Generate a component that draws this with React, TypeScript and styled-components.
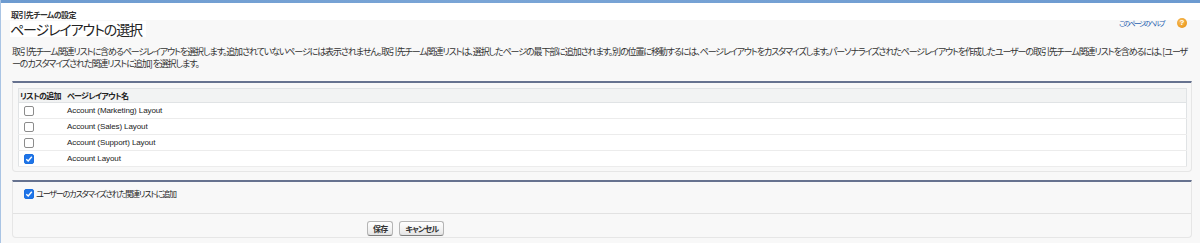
import React from "react";
import styled, { createGlobalStyle } from "styled-components";

const GlobalStyle = createGlobalStyle`
    html, body {
        margin: 0;
        padding: 0;
        background: #f8f8f8;
    }
    body {
        font-family: "Noto Sans CJK JP", "Liberation Sans", sans-serif;
        font-feature-settings: "palt";
        color: #222;
    }
`;

const Page = styled.div`
    width: 1200px;
    height: 243px;
    overflow: hidden;
    border-left: 1px solid #a9c4e4;
    box-sizing: border-box;
    background: #f8f8f8;
`;

const TopStrip = styled.div`
    height: 3px;
    background: linear-gradient(90deg, #6d9bd0 0%, #7aa5d6 40%, #6c9ad0 100%);
`;

const HeaderBand = styled.div`
    height: 17px;
    background: #ffffff;
    display: flex;
    align-items: flex-end;
    padding-left: 10px;
`;

const Breadcrumb = styled.div`
    font-size: 8px;
    font-weight: bold;
    line-height: 8px;
    letter-spacing: -0.6px;
    color: #333;
    margin-bottom: 1px;
`;

const TitleRow = styled.div`
    display: flex;
    justify-content: space-between;
    align-items: flex-start;
    padding: 1px 13px 0 9px;
    height: 17px;
`;

const Title = styled.h1`
    margin: 0;
    font-size: 14px;
    font-weight: normal;
    line-height: 16px;
    letter-spacing: -1.1px;
    color: #222;
    background: #ffffff;
    padding-right: 4px;
`;

const HelpLink = styled.a`
    display: flex;
    align-items: center;
    gap: 13px;
    font-size: 7px;
    letter-spacing: -1.7px;
    color: #1f5fb0;
    text-decoration: none;
    margin-top: -3px;
`;

const HelpIcon = styled.span`
    width: 10px;
    height: 10px;
    border-radius: 50%;
    background: radial-gradient(circle at 40% 35%, #f7c060 0%, #ec9a20 70%, #d98310 100%);
    color: #fff;
    font-size: 8px;
    font-weight: bold;
    line-height: 10px;
    letter-spacing: 0;
    text-align: center;
    font-family: "Liberation Sans", sans-serif;
`;

const Description = styled.p`
    margin: 8px 0 0 0;
    padding: 0 10px 0 11px;
    font-size: 9px;
    line-height: 12px;
    letter-spacing: -1.1px;
    color: #333;
`;

const Panel = styled.div<{ $top: number }>`
    margin: ${(p) => p.$top}px 8px 0 11px;
    background: #f8f8f8;
    border: 1px solid #e6e6e6;
    border-top: 2px solid #66728f;
    border-radius: 0 0 4px 4px;
`;

const TableWrap = styled.div`
    padding: 5px 4px 4px 5px;
`;

const Table = styled.table`
    width: 100%;
    border-collapse: collapse;
    background: #ffffff;
    border: 1px solid #e0e3e5;
`;

const HeadCell = styled.th<{ $width?: number }>`
    text-align: left;
    font-size: 8px;
    font-weight: bold;
    letter-spacing: -0.7px;
    color: #222;
    background: #f2f3f3;
    height: 13px;
    padding: 0 0 0 ${(p) => (p.$width ? 1 : 5)}px;
    width: ${(p) => (p.$width ? `${p.$width}px` : "auto")};
    border-bottom: 1px solid #e0e3e5;
`;

const Cell = styled.td`
    height: 15px;
    padding: 0 0 0 5px;
    font-size: 8px;
    color: #222;
    border-bottom: 1px solid #ececec;
    font-family: "Liberation Sans", "Noto Sans CJK JP", sans-serif;
    letter-spacing: -0.1px;
    vertical-align: middle;
`;

const Box = styled.span<{ $checked?: boolean }>`
    display: inline-flex;
    align-items: center;
    justify-content: center;
    width: 10px;
    height: 10px;
    box-sizing: border-box;
    border-radius: 2px;
    border: 1px solid ${(p) => (p.$checked ? "#1b6fe0" : "#8c8c8c")};
    background: ${(p) => (p.$checked ? "#1e74e8" : "#ffffff")};
    vertical-align: middle;
`;

const OptionRow = styled.div`
    display: flex;
    align-items: center;
    gap: 2px;
    padding: 6px 0 14px 11px;
    height: 11px;
    font-size: 8px;
    letter-spacing: -1.1px;
    color: #222;
`;

const ButtonRow = styled.div`
    border-top: 1px solid #e2e2e2;
    display: flex;
    gap: 6px;
    padding: 7px 0 1px 354px;
`;

const Button = styled.button`
    height: 15px;
    padding: 0 5px;
    font-family: inherit;
    font-feature-settings: "palt";
    font-size: 8px;
    font-weight: bold;
    letter-spacing: -0.8px;
    color: #333;
    border: 1px solid #b5b5b5;
    border-bottom-color: #7f7f7f;
    border-radius: 3px;
    background: linear-gradient(#ffffff, #f1f1f1 60%, #e4e4e4);
    line-height: 13px;
`;

const Check: React.FC<{ checked?: boolean }> = ({ checked }) => (
    <Box $checked={checked}>
        {checked && (
            <svg width="8" height="8" viewBox="0 0 8 8">
                <path d="M1.3 4.2 L3.2 6 L6.8 1.8" fill="none" stroke="#fff" strokeWidth="1.4" />
            </svg>
        )}
    </Box>
);

const layouts = [
    { name: "Account (Marketing) Layout", checked: false },
    { name: "Account (Sales) Layout", checked: false },
    { name: "Account (Support) Layout", checked: false },
    { name: "Account Layout", checked: true },
];

const App: React.FC = () => {
    return (
        <Page>
            <GlobalStyle />
            <TopStrip />
            <HeaderBand>
                <Breadcrumb>取引先チームの設定</Breadcrumb>
            </HeaderBand>
            <TitleRow>
                <Title>ページレイアウトの選択</Title>
                <HelpLink href="#">
                    このページのヘルプ
                    <HelpIcon>?</HelpIcon>
                </HelpLink>
            </TitleRow>
            <Description>
                取引先チーム関連リストに含めるページレイアウトを選択します。追加されていないページには表示されません。取引先チーム関連リストは、選択したページの最下部に追加されます。別の位置に移動するには、ページレイアウトをカスタマイズします。パーソナライズされたページレイアウトを作成したユーザーの取引先チーム関連リストを含めるには、[ユーザーのカスタマイズされた関連リストに追加] を選択します。
            </Description>
            <Panel $top={11}>
                <TableWrap>
                    <Table>
                        <thead>
                            <tr>
                                <HeadCell $width={42}>リストの追加</HeadCell>
                                <HeadCell>ページレイアウト名</HeadCell>
                            </tr>
                        </thead>
                        <tbody>
                            {layouts.map((l) => (
                                <tr key={l.name}>
                                    <Cell>
                                        <Check checked={l.checked} />
                                    </Cell>
                                    <Cell>{l.name}</Cell>
                                </tr>
                            ))}
                        </tbody>
                    </Table>
                </TableWrap>
            </Panel>
            <Panel $top={8}>
                <OptionRow>
                    <Check checked />
                    ユーザーのカスタマイズされた関連リストに追加
                </OptionRow>
                <ButtonRow>
                    <Button>保存</Button>
                    <Button>キャンセル</Button>
                </ButtonRow>
            </Panel>
        </Page>
    );
};

export default App;
